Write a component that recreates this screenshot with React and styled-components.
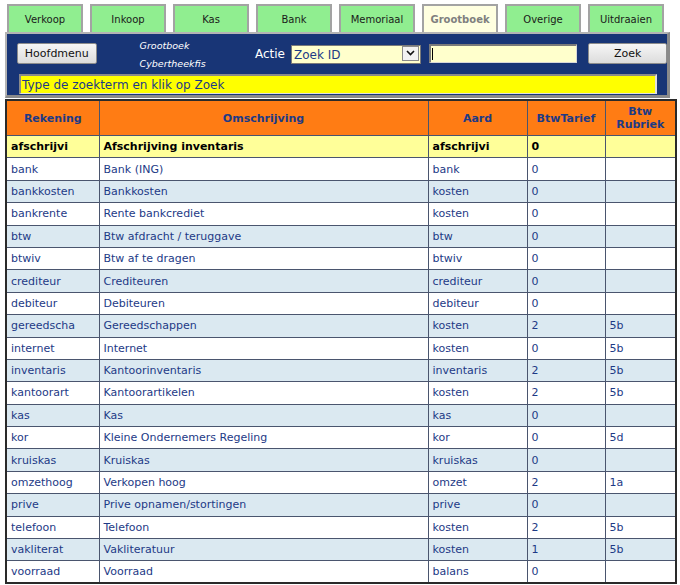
import React from "react";
import styled, { createGlobalStyle } from "styled-components";

const GlobalStyle = createGlobalStyle`
  body {
    margin: 0;
    background: #ffffff;
    font-family: "DejaVu Sans", Verdana, sans-serif;
  }
`;

const Page = styled.div`
  width: 675px;
  padding: 4px 0 0 5px;
`;

const TabRow = styled.div`
  display: flex;
  gap: 7px;
  padding-left: 2px;
  height: 28px;
`;

const Tab = styled.div`
  width: 76px;
  box-sizing: border-box;
  border: 2px solid #a3a3a3;
  border-bottom: none;
  background: ${(p) => (p.active ? "#ffffe0" : "#90ee90")};
  color: ${(p) => (p.active ? "#7f7f7f" : "#1a1a1a")};
  font-weight: ${(p) => (p.active ? "bold" : "normal")};
  font-size: 10px;
  display: flex;
  align-items: center;
  justify-content: center;
  padding-top: 1px;
`;

const Panel = styled.div`
  width: 665px;
  box-sizing: border-box;
  background: #183576;
  border-style: solid;
  border-width: 2px 3px 3px 2px;
  border-color: #b4b4b4 #8a8a8a #8a8a8a #b4b4b4;
  padding: 0 0 1px 0;
`;

const TopRow = styled.div`
  display: flex;
  align-items: center;
  height: 38px;
  padding-left: 10px;
`;

const Button = styled.button`
  width: ${(p) => p.w}px;
  margin-left: ${(p) => p.gap || 0}px;
  height: 21px;
  box-sizing: border-box;
  border: 1px solid #8c8c8c;
  border-radius: 2px;
  background: linear-gradient(#f6f6f6, #dcdcdc);
  font-family: "DejaVu Sans", Verdana, sans-serif;
  font-size: 11px;
  color: #111;
  padding: 1px 0 0;
`;

const Titles = styled.div`
  margin-left: 43px;
  width: 116px;
  padding-top: 4px;
  color: #ffffff;
  font-style: italic;
  font-size: 9.5px;
  line-height: 18px;
`;

const Label = styled.span`
  color: #ffffff;
  font-size: 12px;
  margin-right: 6px;
  margin-top: 1px;
`;

const SelectWrap = styled.div`
  position: relative;
  width: 131px;
  height: 19px;
`;

const Select = styled.select`
  appearance: none;
  width: 100%;
  height: 100%;
  box-sizing: border-box;
  border: 1px solid #7a7a7a;
  background: #ffffcc;
  color: #1d3a86;
  font-family: "DejaVu Sans", Verdana, sans-serif;
  font-size: 12px;
  padding: 0 0 0 2px;
  border-radius: 0;
`;

const Arrow = styled.span`
  position: absolute;
  right: 2px;
  top: 2px;
  width: 17px;
  height: 15px;
  box-sizing: border-box;
  border: 1px solid #8a8a8a;
  background: #f2f2f2;
  display: flex;
  align-items: center;
  justify-content: center;
  pointer-events: none;
`;

const InputWrap = styled.div`
  position: relative;
  margin-left: 8px;
  width: 149px;
  height: 19px;
`;

const Input = styled.input`
  width: 100%;
  height: 100%;
  box-sizing: border-box;
  border-style: solid;
  border-width: 2px 1px 1px 2px;
  border-color: #7a7a7a #d8d8d8 #d8d8d8 #7a7a7a;
  background: #ffffcc;
  padding: 0 2px;
  outline: none;
`;

const Caret = styled.span`
  position: absolute;
  left: 3px;
  top: 4px;
  width: 1px;
  height: 12px;
  background: #000;
`;

const Message = styled.div`
  margin: 2px 0 0 12px;
  width: 638px;
  height: 20px;
  box-sizing: border-box;
  background: #ffff00;
  border-style: solid;
  border-width: 2px 2px 1px 2px;
  border-color: #8a8a8a #e0e0e0 #e0e0e0 #8a8a8a;
  color: #1d3a86;
  font-size: 12px;
  line-height: 18px;
  padding-left: 1px;
  white-space: nowrap;
`;

const Table = styled.table`
  margin-top: 1px;
  width: 670px;
  border-collapse: collapse;
  table-layout: fixed;
  border: 2px solid #2a2a2a;
  font-size: 11px;
`;

const Th = styled.th`
  background: #ff7c14;
  color: #1d3a86;
  font-weight: bold;
  font-size: 11px;
  height: 34px;
  padding: 0 2px;
  border: 1px solid #4a556e;
  text-align: center;
  line-height: 13px;
`;

const Tr = styled.tr`
  height: 22.4px;
  background: ${(p) => (p.selected ? "#ffff99" : p.shade ? "#dbe9f1" : "#ffffff")};
  color: ${(p) => (p.selected ? "#000000" : "#1d3a86")};
  font-weight: ${(p) => (p.selected ? "bold" : "normal")};
`;

const Td = styled.td`
  border: 1px solid #4a556e;
  padding: 0 4px;
  white-space: nowrap;
  overflow: hidden;
`;

const tabs = ["Verkoop", "Inkoop", "Kas", "Bank", "Memoriaal", "Grootboek", "Overige", "Uitdraaien"];

const rows = [
  ["afschrijvi", "Afschrijving inventaris", "afschrijvi", "0", ""],
  ["bank", "Bank (ING)", "bank", "0", ""],
  ["bankkosten", "Bankkosten", "kosten", "0", ""],
  ["bankrente", "Rente bankcrediet", "kosten", "0", ""],
  ["btw", "Btw afdracht / teruggave", "btw", "0", ""],
  ["btwiv", "Btw af te dragen", "btwiv", "0", ""],
  ["crediteur", "Crediteuren", "crediteur", "0", ""],
  ["debiteur", "Debiteuren", "debiteur", "0", ""],
  ["gereedscha", "Gereedschappen", "kosten", "2", "5b"],
  ["internet", "Internet", "kosten", "0", "5b"],
  ["inventaris", "Kantoorinventaris", "inventaris", "2", "5b"],
  ["kantoorart", "Kantoorartikelen", "kosten", "2", "5b"],
  ["kas", "Kas", "kas", "0", ""],
  ["kor", "Kleine Ondernemers Regeling", "kor", "0", "5d"],
  ["kruiskas", "Kruiskas", "kruiskas", "0", ""],
  ["omzethoog", "Verkopen hoog", "omzet", "2", "1a"],
  ["prive", "Prive opnamen/stortingen", "prive", "0", ""],
  ["telefoon", "Telefoon", "kosten", "2", "5b"],
  ["vakliterat", "Vakliteratuur", "kosten", "1", "5b"],
  ["voorraad", "Voorraad", "balans", "0", ""],
];

const App = () => {
  return (
    <Page>
      <GlobalStyle />
      <TabRow>
        {tabs.map((t) => (
          <Tab key={t} active={t === "Grootboek"}>
            {t}
          </Tab>
        ))}
      </TabRow>
      <Panel>
        <TopRow>
          <Button w={80}>Hoofdmenu</Button>
          <Titles>
            <div>Grootboek</div>
            <div>Cybertheekfis</div>
          </Titles>
          <Label>Actie</Label>
          <SelectWrap>
            <Select defaultValue="id">
              <option value="id">Zoek ID</option>
            </Select>
            <Arrow>
              <svg width="9" height="6" viewBox="0 0 9 6">
                <path d="M1 1 L4.5 4.5 L8 1" fill="none" stroke="#111" strokeWidth="1.6" />
              </svg>
            </Arrow>
          </SelectWrap>
          <InputWrap>
            <Input type="text" />
            <Caret />
          </InputWrap>
          <Button w={79} gap={11}>Zoek</Button>
        </TopRow>
        <Message>Type de zoekterm en klik op Zoek</Message>
      </Panel>
      <Table>
        <colgroup>
          <col style={{ width: 93 }} />
          <col style={{ width: 329 }} />
          <col style={{ width: 99 }} />
          <col style={{ width: 78 }} />
          <col style={{ width: 71 }} />
        </colgroup>
        <thead>
          <tr>
            <Th>Rekening</Th>
            <Th>Omschrijving</Th>
            <Th>Aard</Th>
            <Th>BtwTarief</Th>
            <Th>
              Btw
              <br />
              Rubriek
            </Th>
          </tr>
        </thead>
        <tbody>
          {rows.map((r, i) => (
            <Tr key={r[0]} selected={i === 0} shade={i % 2 === 0}>
              {r.map((c, j) => (
                <Td key={j}>{c}</Td>
              ))}
            </Tr>
          ))}
        </tbody>
      </Table>
    </Page>
  );
};

export default App;
